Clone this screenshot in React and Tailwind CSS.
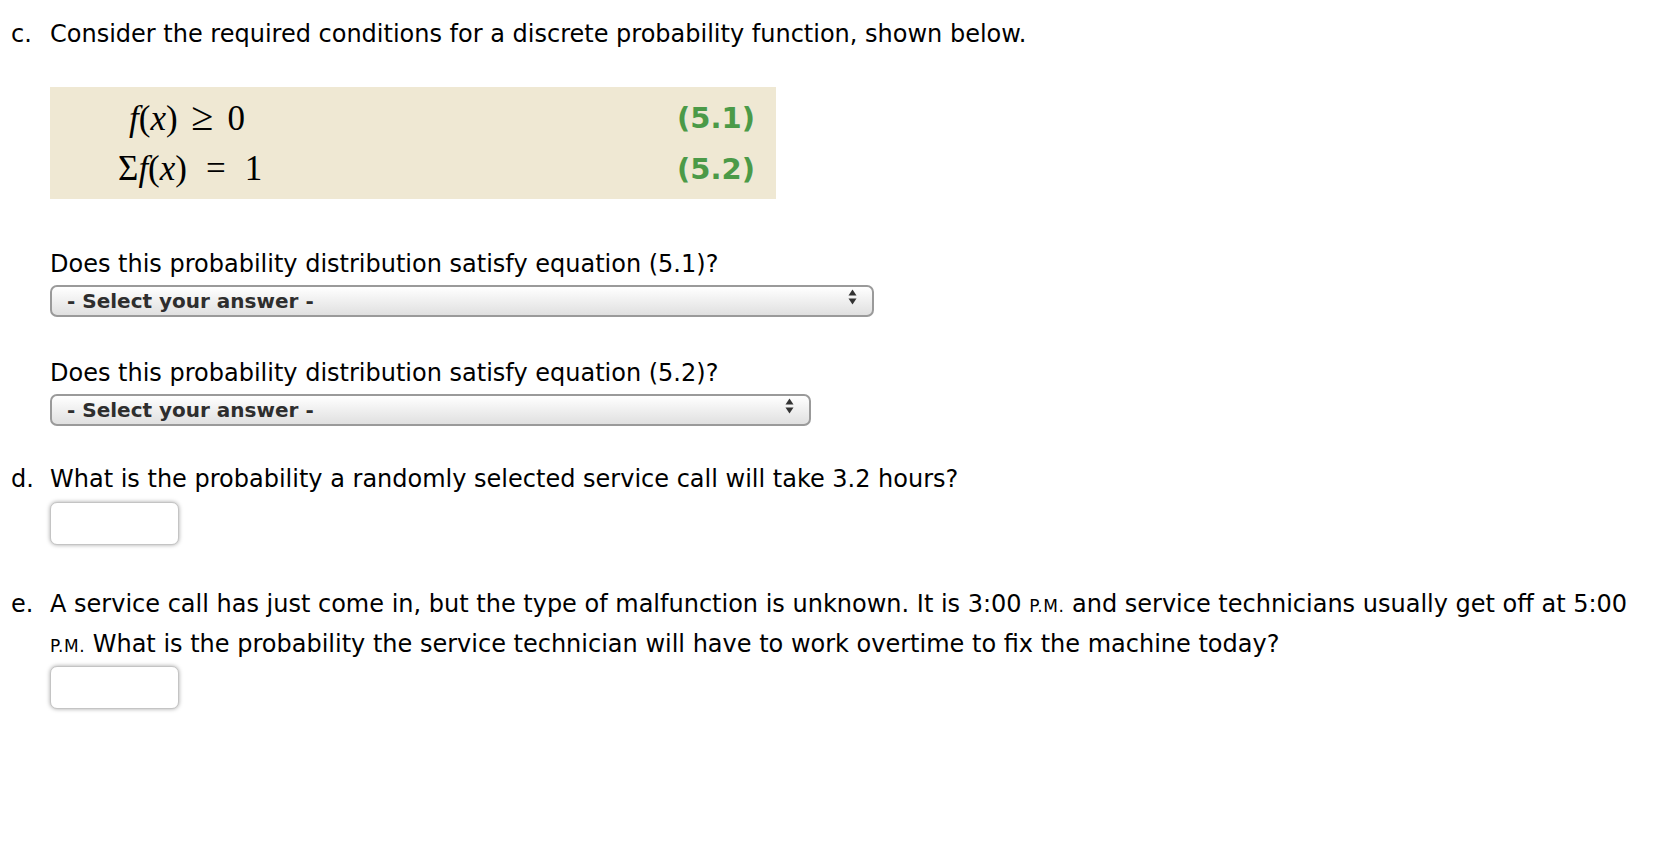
import React from "react";

const SelectBox = ({ width }) => (
  <div className={`relative h-[32px] ${width}`}>
    <select
      defaultValue=""
      className="h-full w-full appearance-none rounded-[7px] border-2 border-[#9a9a9a] bg-gradient-to-b from-white to-[#e0e0e0] pl-[15px] text-[20px] font-bold leading-[28px] text-[#2e2e2e] outline-none"
    >
      <option value="">- Select your answer -</option>
      <option value="yes">Yes</option>
      <option value="no">No</option>
    </select>
    <svg
      className="pointer-events-none absolute right-[17px] top-[8px]"
      width="9"
      height="16"
      viewBox="0 0 9 16"
    >
      <path d="M4.5 0.5 L8.5 6.5 H0.5 Z" fill="#333" />
      <path d="M4.5 15.5 L8.5 9.5 H0.5 Z" fill="#333" />
    </svg>
  </div>
);

const AnswerInput = () => (
  <input
    type="text"
    className="h-[43px] w-[129px] rounded-[7px] border border-[#c4c4c4] bg-white shadow-[0_0_4px_rgba(0,0,0,0.35)] outline-none"
  />
);

const Item = ({ label, children }) => (
  <div className="flex">
    <div className="w-[50px] shrink-0 pl-[11px]">{label}</div>
    <div className="min-w-0 flex-1">{children}</div>
  </div>
);

const PM = () => <span className="text-[17px] tracking-[0.5px]">P.M.</span>;

export default function App() {
  return (
    <div className="min-h-screen w-full bg-white pt-[15px] pr-[8px] text-[24px] leading-[38px] text-black [font-family:'DejaVu_Sans',Verdana,sans-serif]">
      {/* Part c */}
      <Item label="c.">
        <p>Consider the required conditions for a discrete probability function, shown below.</p>

        <div className="mt-[34px] flex h-[112px] w-[726px] flex-col justify-center gap-[12px] bg-[#efe8d3] pr-[21px] [font-family:'Liberation_Serif','Times_New_Roman',serif] text-[35px] leading-[38px]">
          <div className="flex items-center justify-between">
            <span className="pl-[79px]">
              <i>f</i>(<i>x</i>)<span className="mx-[14px] text-[40px]">≥</span>0
            </span>
            <span className="text-[29px] font-bold text-[#4b9a48] [font-family:'DejaVu_Sans',sans-serif]">(5.1)</span>
          </div>
          <div className="flex items-center justify-between">
            <span className="pl-[68px]">
              Σ<i>f</i>(<i>x</i>)<span className="mx-[19px]">=</span>1
            </span>
            <span className="text-[29px] font-bold text-[#4b9a48] [font-family:'DejaVu_Sans',sans-serif]">(5.2)</span>
          </div>
        </div>

        <p className="mt-[46px]">Does this probability distribution satisfy equation (5.1)?</p>
        <div className="-mt-[2px]">
          <SelectBox width="w-[824px]" />
        </div>

        <p className="mt-[41px]">Does this probability distribution satisfy equation (5.2)?</p>
        <div className="-mt-[2px]">
          <SelectBox width="w-[761px]" />
        </div>
      </Item>

      {/* Part d */}
      <div className="mt-[38px]">
        <Item label="d.">
          <p>What is the probability a randomly selected service call will take 3.2 hours?</p>
          <div className="mt-[4px]">
            <AnswerInput />
          </div>
        </Item>
      </div>

      {/* Part e */}
      <div className="mt-[40px]">
        <Item label="e.">
          <p>
            A service call has just come in, but the type of malfunction is unknown. It is 3:00 <PM /> and service
            technicians usually get off at 5:00 <PM /> What is the probability the service technician will have to work
            overtime to fix the machine today?
          </p>
          <div className="mt-[1px]">
            <AnswerInput />
          </div>
        </Item>
      </div>
    </div>
  );
}
